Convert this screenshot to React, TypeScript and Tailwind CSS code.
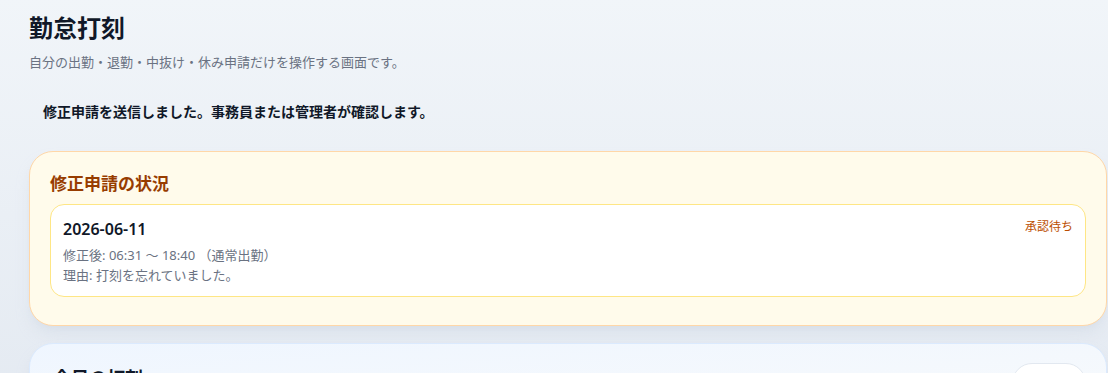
import React from 'react';

interface CorrectionRequest {
  date: string;
  status: string;
  start: string;
  end: string;
  kind: string;
  reason: string;
}

const requests: CorrectionRequest[] = [
  {
    date: '2026-06-11',
    status: '承認待ち',
    start: '06:31',
    end: '18:40',
    kind: '通常出勤',
    reason: '打刻を忘れていました。',
  },
];

const RequestItem: React.FC<{ req: CorrectionRequest }> = ({ req }) => (
  <div className="rounded-[14px] border border-amber-200 bg-white px-3 pt-3 pb-[11px]">
    <div className="flex items-start justify-between">
      <div className="text-base leading-6 font-semibold text-gray-900">{req.date}</div>
      <span className="pt-0.5 text-xs text-amber-700">{req.status}</span>
    </div>
    <p className="mt-1 text-[13px] leading-5 text-gray-500">
      修正後: {req.start} 〜 {req.end} （{req.kind}）
    </p>
    <p className="text-[13px] leading-5 text-gray-500">理由: {req.reason}</p>
  </div>
);

export default function App() {
  return (
    <div
      className="min-h-screen bg-gradient-to-b from-slate-100 to-slate-200 pt-3 pr-px pl-[29px] pb-10 text-gray-900"
      style={{ fontFamily: '"Noto Sans", "Noto Sans CJK JP", sans-serif' }}
    >
      <h1 className="text-2xl leading-8 font-bold text-gray-900">勤怠打刻</h1>
      <p className="mt-2 text-[13px] leading-5 text-gray-500">
        自分の出勤・退勤・中抜け・休み申請だけを操作する画面です。
      </p>

      <div className="mt-[30px] pl-3.5 text-sm leading-5 font-semibold text-gray-900">
        修正申請を送信しました。事務員または管理者が確認します。
      </div>

      <section className="mt-[29px] rounded-3xl border border-orange-200 bg-amber-50 px-5 pt-5 pb-[28px] shadow-lg shadow-slate-300/40">
        <h2 className="text-[17px] leading-6 font-bold text-amber-800">修正申請の状況</h2>
        <div className="mt-2 flex flex-col gap-2">
          {requests.map((r) => (
            <RequestItem key={r.date} req={r} />
          ))}
        </div>
      </section>

      <section className="mt-[17px] rounded-3xl border border-blue-100 bg-gradient-to-br from-blue-50 to-slate-50 px-5 pt-[19px] pb-6 shadow-lg shadow-slate-300/40">
        <div className="flex items-start justify-between">
          <h2 className="pt-[3px] pl-[3px] text-lg leading-6 font-bold text-gray-900">今日の打刻</h2>
          <button className="h-10 w-[74px] rounded-full border border-slate-200 bg-white text-sm text-gray-700">
            更新
          </button>
        </div>
      </section>
    </div>
  );
}
